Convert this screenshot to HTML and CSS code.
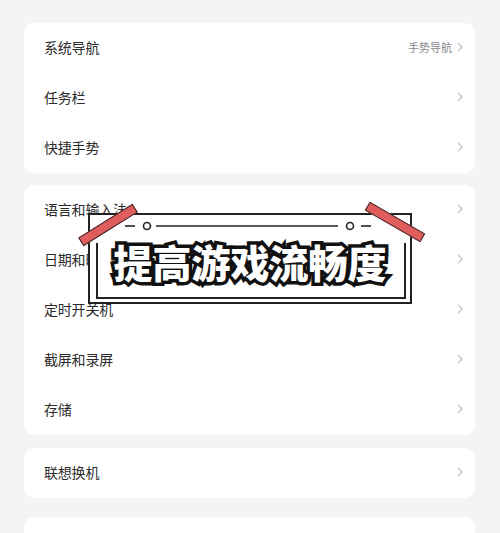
FILE: index.html
```html
<!DOCTYPE html>
<html lang="zh-CN">
<head>
<meta charset="utf-8">
<title>设置</title>
<link rel="stylesheet" href="styles.css">
</head>
<body>
<div class="page">
  <section class="card card-1">
    <div class="row"><span class="label">系统导航</span><span class="value">手势导航</span><svg class="chev" viewBox="0 0 6 10"><polyline points="1,1 5,5 1,9"/></svg></div>
    <div class="row"><span class="label">任务栏</span><svg class="chev" viewBox="0 0 6 10"><polyline points="1,1 5,5 1,9"/></svg></div>
    <div class="row"><span class="label">快捷手势</span><svg class="chev" viewBox="0 0 6 10"><polyline points="1,1 5,5 1,9"/></svg></div>
  </section>
  <section class="card card-2">
    <div class="row"><span class="label">语言和输入法</span><svg class="chev" viewBox="0 0 6 10"><polyline points="1,1 5,5 1,9"/></svg></div>
    <div class="row"><span class="label">日期和时间</span><svg class="chev" viewBox="0 0 6 10"><polyline points="1,1 5,5 1,9"/></svg></div>
    <div class="row"><span class="label">定时开关机</span><svg class="chev" viewBox="0 0 6 10"><polyline points="1,1 5,5 1,9"/></svg></div>
    <div class="row"><span class="label">截屏和录屏</span><svg class="chev" viewBox="0 0 6 10"><polyline points="1,1 5,5 1,9"/></svg></div>
    <div class="row"><span class="label">存储</span><svg class="chev" viewBox="0 0 6 10"><polyline points="1,1 5,5 1,9"/></svg></div>
  </section>
  <section class="card card-3">
    <div class="row"><span class="label">联想换机</span><svg class="chev" viewBox="0 0 6 10"><polyline points="1,1 5,5 1,9"/></svg></div>
  </section>
  <section class="card card-4"></section>

  <div class="banner">
    <svg class="ornament" viewBox="0 0 324 10">
      <line x1="37" y1="5" x2="47" y2="5"/>
      <circle cx="59" cy="5" r="3.5"/>
      <line x1="68" y1="5" x2="250" y2="5"/>
      <circle cx="262" cy="5" r="3.5"/>
      <line x1="273" y1="5" x2="283" y2="5"/>
    </svg>
    <div class="inner-frame"></div>
    <div class="title">提高游戏流畅度</div>
  </div>
  <div class="tape tape-left"></div>
  <div class="tape tape-right"></div>
</div>
</body>
</html>
```
FILE: styles.css
```css
html, body {
  margin: 0;
  padding: 0;
  background: #f4f4f4;
}
body {
  width: 500px;
  height: 533px;
  overflow: hidden;
  font-family: "Noto Sans CJK SC", "Noto Sans", sans-serif;
}
.page {
  position: relative;
  height: 533px;
  box-sizing: border-box;
  padding: 23px 25px 0 24px;
  display: flex;
  flex-direction: column;
  overflow: hidden;
}
.card {
  background: #fff;
  border-radius: 10px;
  display: flex;
  flex-direction: column;
  flex-shrink: 0;
}
.card-2 { margin-top: 12px; }
.card-3 { margin-top: 13px; }
.card-4 { margin-top: 19px; flex: 1; border-radius: 10px 10px 0 0; }
.row {
  height: 50px;
  box-sizing: border-box;
  padding: 0 12px 2px 20px;
  display: flex;
  align-items: center;
}
.label {
  flex: 1;
  font-size: 14px;
  color: #2b2b2b;
  letter-spacing: -0.2px;
}
.value {
  font-size: 11px;
  color: #8a8a8a;
  margin-right: 5px;
}
.chev {
  width: 6px;
  height: 10px;
  fill: none;
  stroke: #c4c4c4;
  stroke-width: 1.3;
}

.banner {
  position: absolute;
  left: 88px;
  top: 213px;
  width: 320px;
  height: 87px;
  border: 2px solid #222;
  background: #fff;
}
.ornament {
  position: absolute;
  left: -2px;
  top: 6px;
  width: 324px;
  height: 10px;
  fill: #fff;
  stroke: #222;
  stroke-width: 1.6;
}
.inner-frame {
  position: absolute;
  left: 6px;
  right: 4px;
  top: 28px;
  bottom: 3px;
  border: 2px solid #222;
  border-top: none;
}
.title {
  position: absolute;
  left: 0;
  right: 0;
  top: 22px;
  text-align: center;
  font-family: "Noto Sans CJK SC", sans-serif;
  font-weight: 900;
  font-size: 39px;
  line-height: 48px;
  color: #fff;
  -webkit-text-stroke: 7px #111;
  paint-order: stroke fill;
}
.tape {
  position: absolute;
  width: 62px;
  height: 8px;
  background: #e05d5d;
  border: 1.5px solid #3a2a2a;
}
.tape-left {
  left: 76px;
  top: 220px;
  transform: rotate(-32deg);
}
.tape-right {
  left: 363px;
  top: 217px;
  transform: rotate(30deg);
}
```
